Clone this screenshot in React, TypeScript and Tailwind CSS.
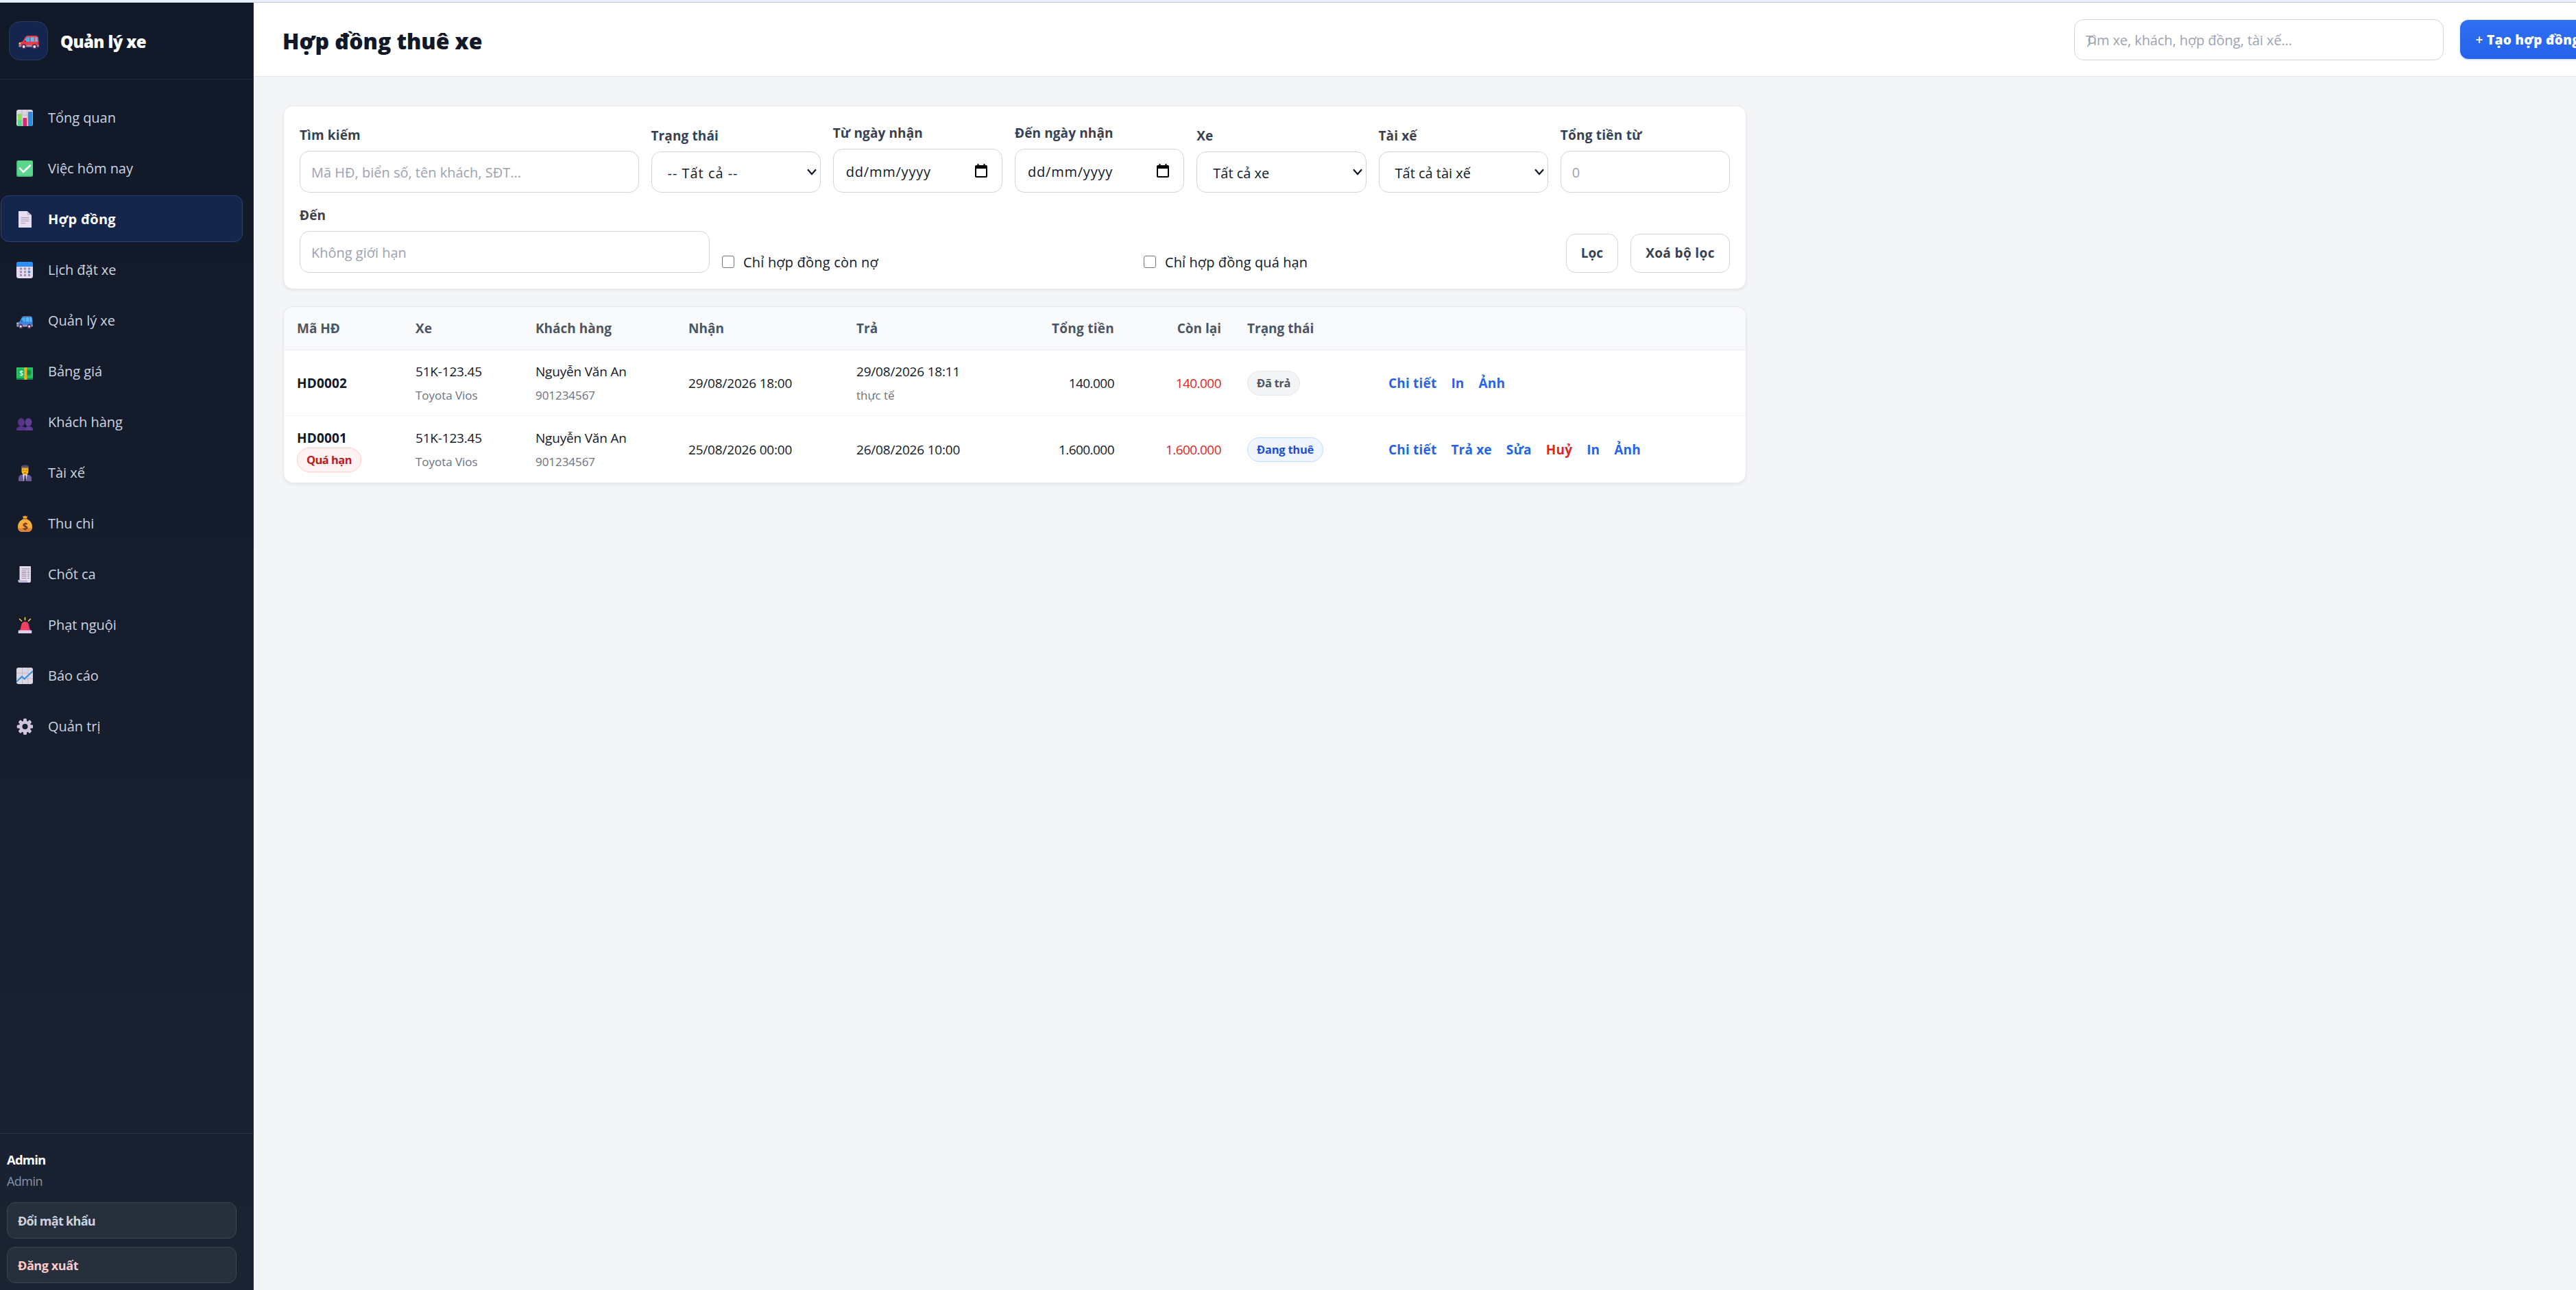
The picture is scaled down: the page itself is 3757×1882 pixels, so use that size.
import React from 'react';

const Svg = ({ children }: { children: React.ReactNode }) => (
  <svg viewBox="0 0 24 24" className="mt-0.5 size-6 shrink-0">{children}</svg>
);

const Car = ({ body, dark, roof, className }: { body: string; dark: string; roof: string; className: string }) => (
  <svg viewBox="0 0 30 20" className={className} preserveAspectRatio="none">
    <path d="M9 3.2Q10.5.6 13.5.5H26Q28.6.5 29 3.2L29.6 9v6.5H1.2Q.2 15.5.4 12.500 .6 9.800 3.500 9.200L6 8.600Z" fill={body} />
    <path d="M10 1.5Q11.500.200 13.500.200H26.500L27 1.500Z" fill={roof} />
    <path d="M10.700 4Q11.600 2.300 13.500 2.200H16V8.800H8.200Z" fill="#3fb4f5" />
    <path d="M17.600 2.200H26Q27.200 2.200 27.400 3.600L28 8.800H17.600Z" fill="#58bdf2" />
    <path d="M22.800 2.200h1.300v6.600h-1.300z" fill={body} />
    <circle cx="9.800" cy="8" r="1.300" fill={dark} />
    <path d="M.4 13.800H29.600V16.500H.600Z" fill="#a58fb5" />
    <rect x=".5" y="10" width="2.600" height="2.600" rx="1" fill="#fde047" />
    <rect x="28.200" y="10" width="1.400" height="2.600" fill={dark} />
    <circle cx="7.700" cy="16" r="3.700" fill="#4a3158" />
    <circle cx="23.300" cy="16" r="3.700" fill="#4a3158" />
    <circle cx="7.700" cy="16" r="1.900" fill="#efe6f6" />
    <circle cx="23.300" cy="16" r="1.900" fill="#efe6f6" />
  </svg>
);

const BarsIcon = () => (
  <Svg>
    <rect width="24" height="24" rx="3" fill="#dcd5e2" />
    <path d="M0 8h24M0 16h24M8 0v24M16 0v24" stroke="#bdb3c6" strokeWidth="1" />
    <path d="M2 7q0-1 1-1h3.500q1 0 1 1v17H3q-1 0-1-1z" fill="#86e05a" />
    <path d="M2 15h5.500v9H3q-1 0-1-1z" fill="#55d58a" />
    <path d="M9.500 13q0-1 1-1h3.500q1 0 1 1v11H9.500z" fill="#d8266d" />
    <path d="M17 4q0-1 1-1h4.500q1 0 1 1v19q0 1-1 1H17z" fill="#3189dc" />
  </Svg>
);
const CheckIcon = () => (
  <Svg>
    <rect width="24" height="24" rx="2.500" fill="#3fae72" />
    <rect x="1.200" y=".6" width="22.800" height="22" rx="2" fill="#5bd68c" />
    <path d="M5 11.500l5 5.500L20 7.500" fill="none" stroke="#fff" strokeWidth="2.600" strokeLinecap="round" strokeLinejoin="round" />
  </Svg>
);
const DocIcon = () => (
  <Svg>
    <path d="M3 0h12.500l6.500 6v18H3z" fill="#e8dff2" />
    <path d="M15.500 0l6.500 6h-5q-1.500 0-1.500-1.500z" fill="#c9bdd4" />
    <path d="M6.500 9.500h12M6.500 12h12M6.500 14.500h12M6.500 17.500h7" stroke="#a79bb3" strokeWidth="1.100" />
  </Svg>
);
const CalendarIcon = () => (
  <Svg>
    <rect width="24" height="24" rx="3.500" fill="#e5d9f1" />
    <path d="M0 7V3.500Q0 0 3.500 0h17Q24 0 24 3.500V7z" fill="#2b8ef7" />
    <g fill="#9c8fa9">
      <path d="M5 8.500h3v3H5zM11 8.500h3v3h-3zM17 8.500h3v3h-3zM5 13.200h3v3H5zM11 13.200h3v3h-3zM5 18h3v3H5zM11 18h3v3h-3zM17 18h3v3h-3z" />
    </g>
    <path d="M16.700 13h3.500v3.500h-3.500z" fill="#2b8ef7" />
  </Svg>
);
const BlueCarIcon = () => (
  <span className="mt-0.5 flex h-6 w-6 shrink-0 items-end">
    <Car body="#3f83dd" dark="#274f9c" roof="#5a6f9c" className="h-[19px] w-6" />
  </span>
);
const MoneyIcon = () => (
  <Svg>
    <path d="M0 6h24v18H0z" fill="#12864c" />
    <path d="M0 6h24v15.500H0z" fill="#2bc765" />
    <path d="M2 8h20v11.500H2z" fill="#22b45a" />
    <circle cx="17.500" cy="13.500" r="3.800" fill="#158a4b" />
    <path d="M11.300 6h4v18h-4z" fill="#f4b01e" />
    <text x="4.200" y="17.800" fontSize="10" fontWeight="700" fontFamily="Open Sans" fill="#d8f7e0">$</text>
  </Svg>
);
const PeopleIcon = () => (
  <Svg>
    <ellipse cx="7" cy="12" rx="5" ry="6" fill="#56358a" />
    <ellipse cx="17.500" cy="12" rx="5" ry="6" fill="#5f3c96" />
    <path d="M0 24v-1.500Q0 18 7 18q5 0 6 2.500V24z" fill="#553388" />
    <path d="M12.500 24v-2Q13 18 17.500 18q6.500 0 6.500 4.500V24z" fill="#5f3c96" />
  </Svg>
);
const PilotIcon = () => (
  <Svg>
    <path d="M3 24v-4q0-5 5-5.500h8q6 .5 6 5.500v4z" fill="#6a5d97" />
    <path d="M9 14h7l-2 10h-3.500z" fill="#d8d0ea" />
    <path d="M11.700 15.500h1.800l.8 8.500h-3.300z" fill="#3a2e5c" />
    <path d="M7.500 5h10v4.500q0 5-5 5t-5-5z" fill="#fbb81c" />
    <path d="M7 5.500V2Q8.500 0 12.500 0T18 2v3.500q-2-1-5.500-1T7 5.500z" fill="#4a4272" />
    <path d="M7.500 4h10" stroke="#c99242" strokeWidth="1" />
    <path d="M9.500 8h1.800M13.700 8h1.800M11 12h3" stroke="#6d3d12" strokeWidth="1.100" />
  </Svg>
);
const BagIcon = () => (
  <Svg>
    <path d="M9 .8l2 .700L12.500 0 14 1.500l2-.700L15 4h-5z" fill="#f8a72f" />
    <path d="M9.500 4h6v2h-6z" fill="#9b5a32" />
    <path d="M9.500 5.500h6Q23 9 23 16.500 23 24 16 24H9Q2 24 2 16.500 2 9 9.500 5.500z" fill="#f6ad3d" />
    <path d="M2.300 18.500h20.400Q21.500 24 16 24H9q-5.500 0-6.700-5.500z" fill="#dd8240" />
    <text x="8.700" y="20.500" fontSize="14" fontWeight="700" fontFamily="Open Sans" fill="#6b3b26">$</text>
  </Svg>
);
const ReceiptIcon = () => (
  <Svg>
    <path d="M4.500 0h16.500v21.500q0 2.500-2.500 2.500H5.500Q2.300 24 2.300 20.500h2.200z" fill="#e3dbec" />
    <path d="M2.300 20.500h13.200q.3 3.500 3 3.500H5.500Q2.300 24 2.300 20.500z" fill="#c3b3dc" />
    <path d="M7.500 4h11.500M7.500 7h7M16 7h3M7.500 9.500h7M16 9.500h3M7.500 12h7M16 12h3M7.500 14.500h7M16 14.500h3M7.500 17.500h7M16 17.500h3" stroke="#93889f" strokeWidth="1.100" />
  </Svg>
);
const SirenIcon = () => (
  <Svg>
    <path d="M12.500 1v3.500M4.500 3l3 3M20.500 3l-3 3" stroke="#fbcf45" strokeWidth="1.600" strokeLinecap="round" />
    <path d="M5 20.500L7.300 11q1-4 5.200-4t5.200 4L20 20.500z" fill="#f2415c" />
    <path d="M13.500 7q3.300.4 4.200 4L20 20.500h-3.500z" fill="#e33a80" />
    <path d="M3.500 19.500h18q.8 0 .8 1V24H2.700v-3.500q0-1 .8-1z" fill="#ddd0ef" />
  </Svg>
);
const ChartIcon = () => (
  <Svg>
    <rect width="24" height="24" rx="3" fill="#ddd7e4" />
    <path d="M0 8h24M0 16h24M8.500 0v24M17 0v24" stroke="#c2b9cc" strokeWidth="1" />
    <path d="M0 20.500l8-7.500 3.500 3.500L24 5" fill="none" stroke="#2f8fdd" strokeWidth="2" />
  </Svg>
);
const GearIcon = () => (
  <Svg>
    <g fill="#cfc4dc">
      {[0, 45, 90, 135].map((a) => (
        <rect key={a} x="10" y=".3" width="5" height="23.600" rx="1.600" transform={`rotate(${a} 12.500 12.100)`} />
      ))}
    </g>
    <circle cx="12.500" cy="12.100" r="6.300" fill="none" stroke="#cfc4dc" strokeWidth="4.600" />
    <circle cx="12.500" cy="12.100" r="4" fill="#141d2b" />
  </Svg>
);

const MENU: { label: string; icon: React.ReactNode; active?: boolean }[] = [
  { label: 'Tổng quan', icon: <BarsIcon /> },
  { label: 'Việc hôm nay', icon: <CheckIcon /> },
  { label: 'Hợp đồng', icon: <DocIcon />, active: true },
  { label: 'Lịch đặt xe', icon: <CalendarIcon /> },
  { label: 'Quản lý xe', icon: <BlueCarIcon /> },
  { label: 'Bảng giá', icon: <MoneyIcon /> },
  { label: 'Khách hàng', icon: <PeopleIcon /> },
  { label: 'Tài xế', icon: <PilotIcon /> },
  { label: 'Thu chi', icon: <BagIcon /> },
  { label: 'Chốt ca', icon: <ReceiptIcon /> },
  { label: 'Phạt nguội', icon: <SirenIcon /> },
  { label: 'Báo cáo', icon: <ChartIcon /> },
  { label: 'Quản trị', icon: <GearIcon /> },
];

function Sidebar() {
  return (
    <aside className="flex w-[370px] shrink-0 flex-col border-r border-[#222d40] bg-linear-to-b from-[#111827] to-[#1a2332]">
      <div className="flex h-28 shrink-0 items-center border-b border-[#232d3b] pl-[13px]">
        <div className="flex size-[57px] items-center justify-center rounded-2xl border border-[#2a3b5f] bg-[#14264d] pt-[5px]">
          <Car body="#ee3b4b" dark="#a81f3d" roof="#f0474e" className="h-5 w-[30px]" />
        </div>
        <span className="ml-[18px] pt-[3px] text-2xl font-extrabold tracking-[-0.025em] whitespace-nowrap text-white">Quản lý xe</span>
      </div>
      <nav className="flex flex-col gap-1.5 pt-[21px] pr-[15px] pl-px">
        {MENU.map((m) => (
          <a
            key={m.label}
            className={
              m.active
                ? 'flex h-[68px] items-center gap-[22px] rounded-xl border border-[#28437a] bg-[#15264c] pl-[22px] text-xl font-bold tracking-[0.015em] text-white'
                : 'flex h-[68px] items-center gap-[22px] rounded-xl border border-transparent pl-[22px] text-xl tracking-[-0.002em] text-[#cbd5e1]'
            }
          >
            {m.icon}
            <span className="pt-0.5">{m.label}</span>
          </a>
        ))}
      </nav>
      <div className="mt-auto border-t border-[#2a3442] pt-6 pr-6 pb-[10px] pl-[10px]">
        <div className="text-[18.5px] leading-7 font-bold tracking-[-0.045em] text-white">Admin</div>
        <div className="mt-[3px] text-lg leading-7 tracking-[-0.029em] text-[#8494ab]">Admin</div>
        <button className="mt-[17px] flex h-[53px] w-full items-center rounded-xl border border-[#3c4653] bg-[#262f3c] pl-[15px] text-lg font-bold tracking-[-0.039em] text-[#cbd5e1]">
          Đổi mật khẩu
        </button>
        <button className="mt-3 flex h-[53px] w-full items-center rounded-xl border border-[#3c4653] bg-[#262f3c] pl-[15px] text-lg font-bold tracking-[-0.023em] text-[#fecaca]">
          Đăng xuất
        </button>
      </div>
    </aside>
  );
}

function Header() {
  return (
    <header className="flex h-[108px] shrink-0 items-center border-b border-[#e5e7eb] bg-white pl-[42px]">
      <h1 className="pt-[5px] text-[32px] font-extrabold tracking-[-0.003em] whitespace-nowrap text-[#111827]">Hợp đồng thuê xe</h1>
      <div className="relative ml-auto flex h-[60px] w-[539px] shrink-0 items-center rounded-[14px] border border-[#d1d5db] bg-white pt-[3px] pl-4 text-xl tracking-[-0.004em] text-[#9ca3af]">
        Tìm xe, khách, hợp đồng, tài xế...
        <svg viewBox="0 0 16 18" className="absolute top-[23px] left-[17px] h-[18px] w-4" fill="none" stroke="#9ca3af" strokeWidth="1.500">
          <circle cx="8" cy="6.500" r="4.800" />
          <path d="M4.700 10.300L1.300 16.500" />
        </svg>
      </div>
      <button className="-mr-12 ml-6 flex h-[57px] w-[217px] shrink-0 items-center gap-[5px] rounded-xl bg-linear-to-b from-[#2f6ff2] to-[#2563eb] pt-px pl-[22px] text-[19px] whitespace-nowrap text-white shadow-[0_1px_3px_rgba(37,99,235,0.3)]">
        <span className="w-3 font-semibold">+</span>
        <span className="font-extrabold tracking-[0.015em]">Tạo hợp đồng</span>
      </button>
    </header>
  );
}

const CONTROL = 'flex w-full items-center rounded-[14px] border border-[#d1d5db] bg-white text-xl';

function Field({ label, children, labelClass = 'tracking-[0.006em]' }: { label: string; children: React.ReactNode; labelClass?: string }) {
  return (
    <div className="flex min-w-0 flex-col pt-px">
      <span className={`mb-[9px] text-[19px] leading-[27px] font-bold whitespace-nowrap text-[#374151] ${labelClass}`}>{label}</span>
      {children}
    </div>
  );
}

const TextBox = ({ text }: { text: string }) => (
  <div className={`${CONTROL} h-[61px] pt-0.5 pl-4 text-[#9ca3af]`}>{text}</div>
);

const SelectBox = ({ text, textClass }: { text: string; textClass?: string }) => (
  <div className={`${CONTROL} h-[60px] justify-between pt-1 pr-[5px] pl-[23px] text-[#111827]`}>
    <span className={textClass}>{text}</span>
    <svg viewBox="0 0 14 10" className="mb-1 h-2.5 w-3.5" fill="none" stroke="#111827" strokeWidth="2.200">
      <path d="M1 1.200l6 6.800 6-6.800" />
    </svg>
  </div>
);

const DateBox = () => (
  <div className={`${CONTROL} h-16 justify-between pr-[21px] pl-[18px] text-[#111827]`}>
    <span className="pt-[3px] tracking-[0.039em]">dd/mm/yyyy</span>
    <svg viewBox="0 0 18 20" className="h-5 w-[18px]">
      <path d="M3.500 0h2v2h7V0h2v2h1.700Q18 2 18 3.800v14.400Q18 20 16.200 20H1.800Q0 20 0 18.200V3.800Q0 2 1.800 2h1.700zM2 7v11h14V7z" fill="#000" fillRule="evenodd" />
    </svg>
  </div>
);

const Check = ({ label, labelClass }: { label: string; labelClass: string }) => (
  <label className="flex h-8 items-center gap-[13px] text-xl whitespace-nowrap text-[#111827]">
    <span className="size-[18px] rounded-[3px] border-[1.500px] border-[#767676] bg-white" />
    <span className={`pt-px ${labelClass}`}>{label}</span>
  </label>
);

function Filters() {
  return (
    <section className="h-[268px] rounded-[14px] border border-[#e5e7eb] bg-white px-[23px] pt-[25px] shadow-[0_2px_5px_rgba(15,23,42,0.06)]">
      <div className="grid grid-cols-[2fr_repeat(6,1fr)] items-end gap-[18px]">
        <Field label="Tìm kiếm"><TextBox text="Mã HĐ, biển số, tên khách, SĐT..." /></Field>
        <Field label="Trạng thái"><SelectBox text="-- Tất cả --" textClass="tracking-[0.049em]" /></Field>
        <Field label="Từ ngày nhận"><DateBox /></Field>
        <Field label="Đến ngày nhận"><DateBox /></Field>
        <Field label="Xe"><SelectBox text="Tất cả xe" /></Field>
        <Field label="Tài xế"><SelectBox text="Tất cả tài xế" /></Field>
        <Field label="Tổng tiền từ" labelClass="tracking-[0.012em]"><TextBox text="0" /></Field>
      </div>
      <div className="mt-[19px] grid grid-cols-[598px_597px_1fr_auto] items-end gap-[18px]">
        <Field label="Đến"><TextBox text="Không giới hạn" /></Field>
        <Check label="Chỉ hợp đồng còn nợ" labelClass="tracking-[0.010em]" />
        <Check label="Chỉ hợp đồng quá hạn" labelClass="tracking-[0.005em]" />
        <div className="flex gap-[18px] text-[19px] font-bold text-[#374151]">
          <button className="h-[57px] w-[76px] rounded-[14px] border border-[#d1d5db] bg-white">Lọc</button>
          <button className="h-[57px] w-[145px] rounded-[14px] border border-[#d1d5db] bg-white tracking-[0.020em]">Xoá bộ lọc</button>
        </div>
      </div>
    </section>
  );
}

const Stack = ({ top, bottom }: { top: string; bottom: string }) => (
  <div className="pb-px">
    <div className="leading-[35px]">{top}</div>
    <div className="text-[17px] leading-[34px] tracking-[-0.003em] text-[#6b7280]">{bottom}</div>
  </div>
);

const Links = ({ items }: { items: string[] }) => (
  <div className="flex gap-[21px] font-bold tracking-[0.010em] text-[#2563eb]">
    {items.map((t) => (
      <a key={t} className={t === 'Huỷ' ? 'text-[#dc2626]' : ''}>{t}</a>
    ))}
  </div>
);

const Badge = ({ text, className }: { text: string; className: string }) => (
  <span className={`mb-0.5 flex h-9 w-fit items-center rounded-full border px-[13px] pt-px text-[16.5px] leading-none font-bold ${className}`}>{text}</span>
);

function Contracts() {
  return (
    <section className="mt-[25px] h-[258px] overflow-hidden rounded-[14px] border border-[#e5e7eb] bg-white shadow-[0_2px_5px_rgba(15,23,42,0.06)]">
      <table className="w-full table-fixed border-separate border-spacing-0 text-[19px] whitespace-nowrap text-[#111827] [&_td]:pt-0.5 [&_td]:pr-[18px] [&_td]:pb-0 [&_td]:pl-[19px] [&_th]:py-0 [&_th]:pr-[18px] [&_th]:pl-[19px]">
        <colgroup>
          <col className="w-[173px]" />
          <col className="w-[175px]" />
          <col className="w-[223px]" />
          <col className="w-[245px]" />
          <col className="w-[241px]" />
          <col className="w-[172px]" />
          <col className="w-[156px]" />
          <col className="w-[207px]" />
          <col />
        </colgroup>
        <thead>
          <tr className="h-[63px] bg-[#f9fafb] text-left text-[#4b5563] [&_th]:border-b [&_th]:border-[#e5e7eb]">
            <th>Mã HĐ</th>
            <th>Xe</th>
            <th>Khách hàng</th>
            <th>Nhận</th>
            <th>Trả</th>
            <th className="text-right tracking-[0.014em]">Tổng tiền</th>
            <th className="text-right">Còn lại</th>
            <th className="pl-5!">Trạng thái</th>
            <th />
          </tr>
        </thead>
        <tbody className="tracking-[-0.010em]">
          <tr className="h-24 [&_td]:border-b [&_td]:border-[#f3f4f6]">
            <td className="font-bold tracking-[0.008em]">HD0002</td>
            <td><Stack top="51K-123.45" bottom="Toyota Vios" /></td>
            <td><Stack top="Nguyễn Văn An" bottom="901234567" /></td>
            <td>29/08/2026 18:00</td>
            <td><Stack top="29/08/2026 18:11" bottom="thực tế" /></td>
            <td className="text-right tracking-[-0.029em]">140.000</td>
            <td className="text-right tracking-[-0.029em] text-[#dc2626]">140.000</td>
            <td className="pl-5!"><Badge text="Đã trả" className="border-[#e5e7eb] bg-[#f3f4f6] tracking-[-0.020em] text-[#4b5563]" /></td>
            <td><Links items={['Chi tiết', 'In', 'Ảnh']} /></td>
          </tr>
          <tr className="h-[97px]">
            <td className="tracking-[0.008em]">
              <div className="pt-0.5 leading-7 font-bold">HD0001</div>
              <Badge text="Quá hạn" className="border-[#fecaca] bg-[#fef2f2] tracking-[-0.034em] text-[#b91c1c]" />
            </td>
            <td><Stack top="51K-123.45" bottom="Toyota Vios" /></td>
            <td><Stack top="Nguyễn Văn An" bottom="901234567" /></td>
            <td>25/08/2026 00:00</td>
            <td>26/08/2026 10:00</td>
            <td className="text-right tracking-[-0.029em]">1.600.000</td>
            <td className="text-right tracking-[-0.029em] text-[#dc2626]">1.600.000</td>
            <td className="pl-5!"><Badge text="Đang thuê" className="border-[#bfdbfe] bg-[#eff6ff] tracking-[-0.015em] text-[#1d4ed8]" /></td>
            <td><Links items={['Chi tiết', 'Trả xe', 'Sửa', 'Huỷ', 'In', 'Ảnh']} /></td>
          </tr>
        </tbody>
      </table>
    </section>
  );
}

export default function App() {
  return (
    <div className="flex h-screen w-full flex-col overflow-hidden bg-[#f4f5f7] font-['Open_Sans','Noto_Sans',sans-serif]">
      <div className="h-1 shrink-0 border-b border-[#c5cad2] bg-[#e6effc]" />
      <div className="flex min-h-0 flex-1">
        <Sidebar />
        <div className="flex min-w-0 flex-1 flex-col overflow-hidden">
          <Header />
          <main className="ml-[43px] w-[2134px] pt-[42px]">
            <Filters />
            <Contracts />
          </main>
        </div>
      </div>
    </div>
  );
}
